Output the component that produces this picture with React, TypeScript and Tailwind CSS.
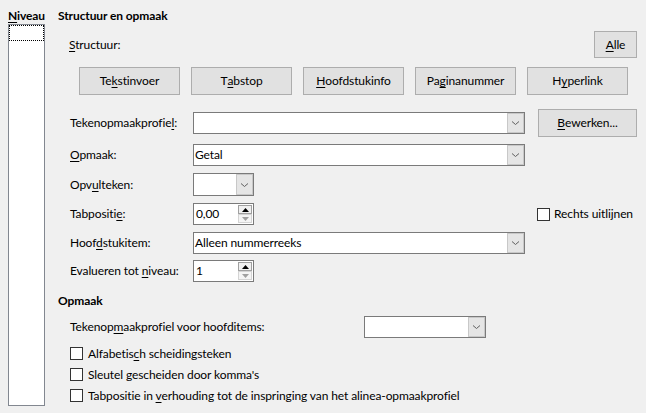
import React from "react";

const U = ({ children }: { children: React.ReactNode }) => (
  <span className="underline underline-offset-[2px] decoration-1">{children}</span>
);

const Btn = ({ children, className = "" }: { children: React.ReactNode; className?: string }) => (
  <div
    className={
      "flex items-center justify-center bg-[#e1e1e1] border border-[#adadad] text-black " + className
    }
  >
    {children}
  </div>
);

const Chevron = () => (
  <svg width="9" height="6" viewBox="0 0 9 6">
    <path d="M1 1.5 L4.5 4.5 L8 1.5" fill="none" stroke="#606060" strokeWidth="1" />
  </svg>
);

const Combo = ({ value = "", className = "" }: { value?: string; className?: string }) => (
  <div className={"flex h-[22px] bg-white border border-[#7a7a7a] " + className}>
    <div className="flex-1 flex items-center pl-[1px] whitespace-nowrap overflow-hidden">{value}</div>
    <div className="w-[17px] flex items-center justify-center bg-[#e5e5e5] border border-[#c8c8c8]">
      <Chevron />
    </div>
  </div>
);

const Spin = ({ value }: { value: string }) => (
  <div className="flex h-[22px] w-[61px] bg-white border border-[#7a7a7a]">
    <div className="flex-1 flex items-center pl-[2px]">{value}</div>
    <div className="w-[16px] flex flex-col p-[1px] gap-0">
      <div className="flex-1 flex items-center justify-center bg-[#f0f0f0] border border-[#a0a0a0]">
        <svg width="7" height="4" viewBox="0 0 7 4">
          <path d="M0 4 L3.5 0 L7 4 Z" fill="#000" />
        </svg>
      </div>
      <div className="flex-1 flex items-center justify-center bg-[#f4f4f4] border border-[#d4d4d4]">
        <svg width="7" height="4" viewBox="0 0 7 4">
          <path d="M0 0 L3.5 4 L7 0 Z" fill="#a0a0a0" />
        </svg>
      </div>
    </div>
  </div>
);

const Check = () => <div className="w-[13px] h-[13px] bg-white border border-[#333333] shrink-0" />;

export default function App() {
  return (
    <div className="w-[646px] h-[413px] bg-[#f0f0f0] flex pl-[8px] pr-[9px] pt-[8px] font-['Lato',sans-serif] text-[12px] tracking-[-0.1px] leading-[16px] text-black overflow-hidden">
      {/* Left column */}
      <div className="w-[37px] flex flex-col shrink-0">
        <div className="h-[16px] font-bold whitespace-nowrap">
          <U>N</U>iveau
        </div>
        <div className="mt-0 h-[382px] bg-white border border-[#828790] p-0">
          <div className="h-[16px] border border-dotted border-black" />
        </div>
      </div>

      {/* Right column */}
      <div className="flex-1 ml-[13px] flex flex-col">
        <div className="h-[16px] font-bold whitespace-nowrap">Structuur en opmaak</div>

        <div className="mt-[7px] h-[27px] flex items-center">
          <div className="pl-[11px]">
            <U>S</U>tructuur:
          </div>
          <Btn className="ml-auto w-[43px] h-[27px]">
            <U>A</U>lle
          </Btn>
        </div>

        <div className="mt-[9px] h-[28px] flex gap-[11px] pl-[21px]">
          <Btn className="w-[101px] h-[28px]">
            Te<U>k</U>stinvoer
          </Btn>
          <Btn className="w-[101px] h-[28px]">
            T<U>a</U>bstop
          </Btn>
          <Btn className="w-[101px] h-[28px]">
            <U>H</U>oofdstukinfo
          </Btn>
          <Btn className="w-[101px] h-[28px]">
            Pa<U>g</U>inanummer
          </Btn>
          <Btn className="w-[101px] h-[28px]">
            H<U>y</U>perlink
          </Btn>
        </div>

        <div className="mt-[14px] h-[28px] flex items-center pl-[12px]">
          <div className="w-[123px] whitespace-nowrap">
            Tekenopmaakprofie<U>l</U>:
          </div>
          <Combo className="w-[332px]" />
          <Btn className="ml-[13px] w-[99px] h-[28px]">
            <U>B</U>ewerken...
          </Btn>
        </div>

        <div className="mt-[7px] h-[22px] flex items-center pl-[12px]">
          <div className="w-[123px] whitespace-nowrap">
            <U>O</U>pmaak:
          </div>
          <Combo className="w-[332px]" value="Getal" />
        </div>

        <div className="mt-[7px] h-[23px] flex items-center pl-[12px]">
          <div className="w-[123px] whitespace-nowrap">
            Opv<U>u</U>lteken:
          </div>
          <Combo className="w-[61px] h-[23px]" />
        </div>

        <div className="mt-[7px] h-[22px] flex items-center pl-[12px]">
          <div className="w-[123px] whitespace-nowrap">
            Tabpositi<U>e</U>:
          </div>
          <Spin value="0,00" />
          <div className="flex-1" />
          <div className="w-[100px] flex items-center gap-[4px] whitespace-nowrap">
            <Check />
            <span>Rechts uitlijnen</span>
          </div>
        </div>

        <div className="mt-[7px] h-[22px] flex items-center pl-[12px]">
          <div className="w-[123px] whitespace-nowrap">
            Hoof<U>d</U>stukitem:
          </div>
          <Combo className="w-[332px]" value="Alleen nummerreeks" />
        </div>

        <div className="mt-[6px] h-[22px] flex items-center pl-[12px]">
          <div className="w-[123px] whitespace-nowrap">
            Evalueren tot <U>n</U>iveau:
          </div>
          <Spin value="1" />
        </div>

        <div className="mt-[11px] h-[16px] font-bold">Opmaak</div>

        <div className="mt-[7px] h-[22px] flex items-center pl-[12px]">
          <div className="w-[294px] whitespace-nowrap">
            Tekenop<U>m</U>aakprofiel voor hoofditems:
          </div>
          <Combo className="w-[122px]" />
        </div>

        <div className="mt-[5px] flex flex-col pl-[12px]">
          <div className="h-[21px] flex items-center gap-[5px] whitespace-nowrap">
            <Check />
            <span>
              Alfabetis<U>c</U>h scheidingsteken
            </span>
          </div>
          <div className="h-[21px] flex items-center gap-[5px] whitespace-nowrap">
            <Check />
            <span>Sleutel gescheiden door komma's</span>
          </div>
          <div className="h-[21px] flex items-center gap-[5px] whitespace-nowrap">
            <Check />
            <span>
              Tabpositie in <U>v</U>erhouding tot de inspringing van het alinea-opmaakprofiel
            </span>
          </div>
        </div>
      </div>
    </div>
  );
}
